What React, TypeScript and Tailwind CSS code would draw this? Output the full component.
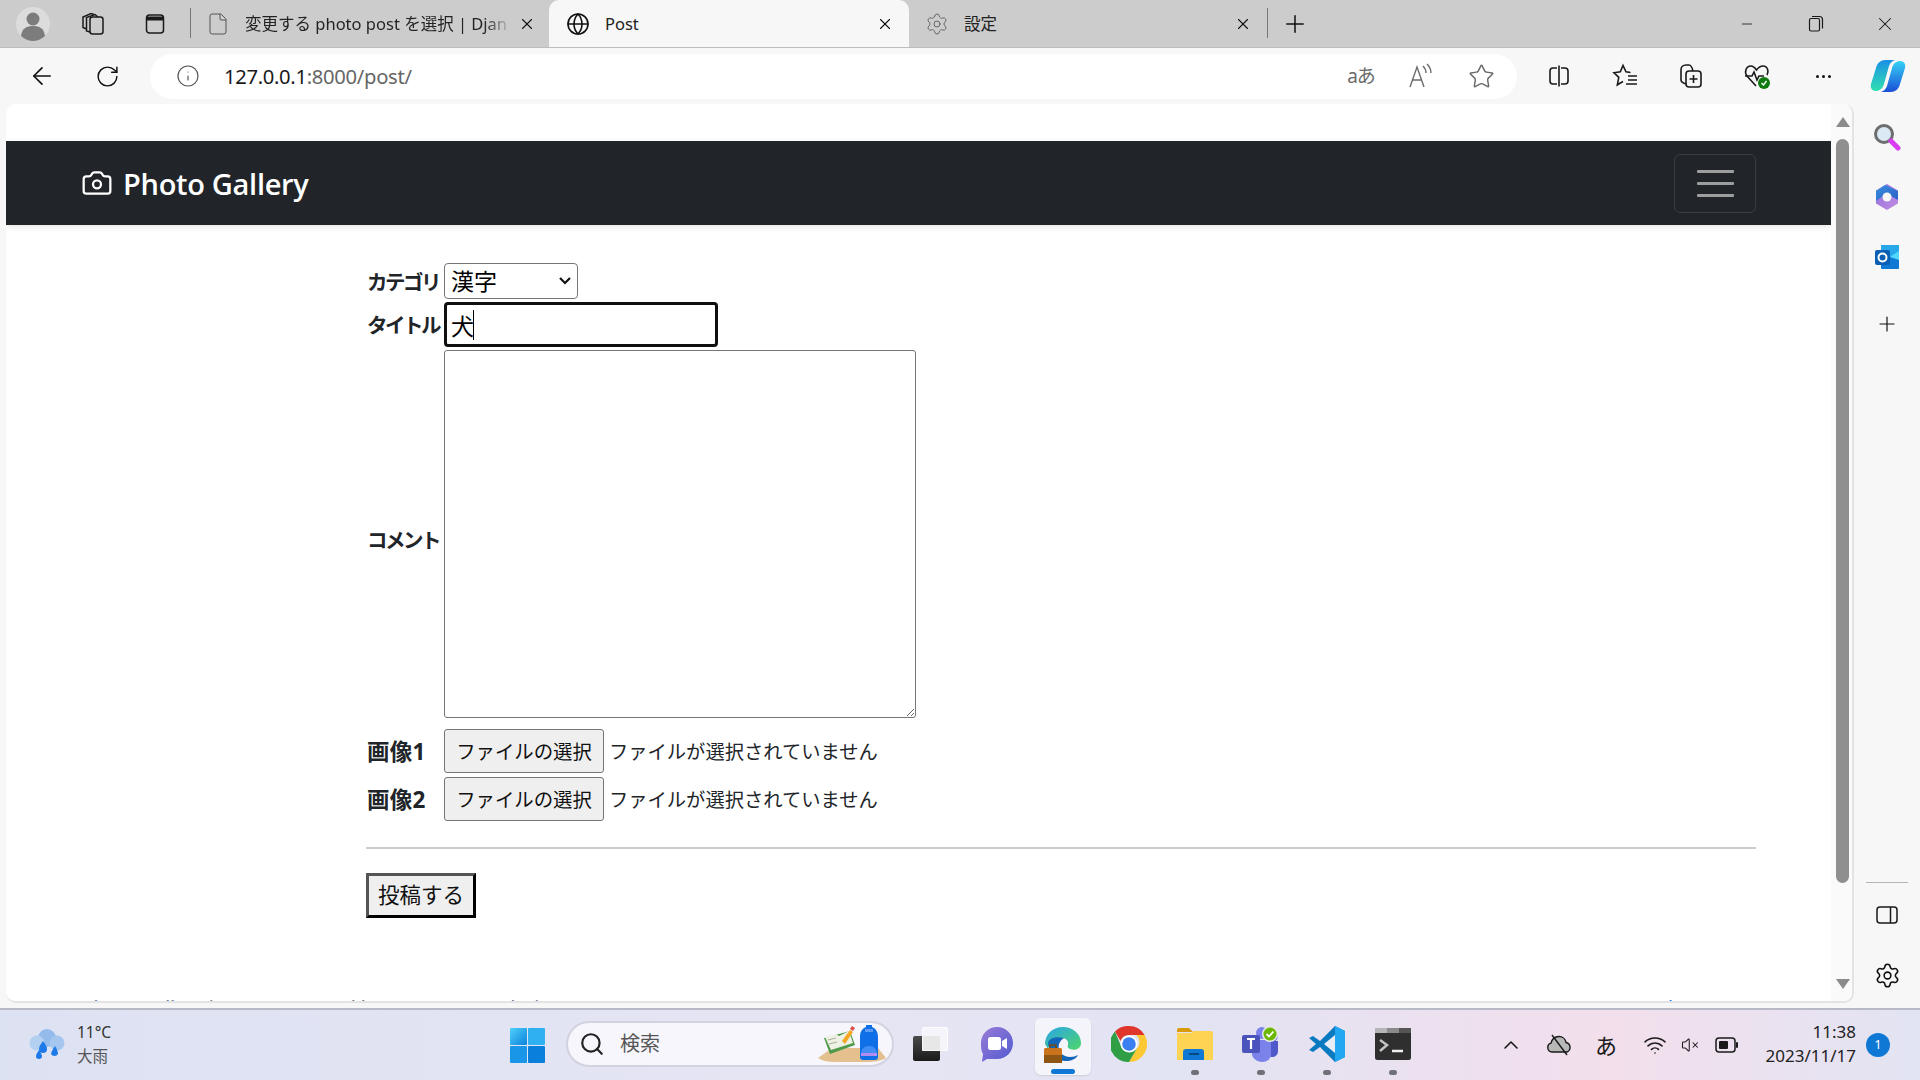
import React from "react";
import {
  ArrowLeft,
  Camera,
  ChevronUp,
  File,
  Globe,
  Info,
  Minus,
  Plus,
  RotateCw,
  Search,
  Settings,
  Star,
  VolumeX,
  Wifi,
  X,
} from "lucide-react";

const UI_FONT = "font-['Noto_Sans','Noto_Sans_CJK_JP',sans-serif]";

function ProfileIcon() {
  return (
    <svg width="36" height="36" viewBox="0 0 36 36">
      <ellipse cx="18" cy="18" rx="17" ry="17" fill="#dcdcdc" />
      <circle cx="18" cy="13" r="6.5" fill="#7c7c7c" />
      <path d="M6 30c1-8 6-10 12-10s11 2 12 10c-3 3-8 5-12 5s-9-2-12-5z" fill="#7c7c7c" />
    </svg>
  );
}

function CollectionsTabIcon() {
  return (
    <svg width="26" height="26" viewBox="0 0 26 26" fill="none" stroke="#1a1a1a" strokeWidth="1.5">
      <rect x="10" y="6" width="13" height="17" rx="2.5" />
      <path d="M10 21L6.5 20V6.5L15 3.5l3 2.5" />
      <path d="M6.5 18L3 16.5V6L11 2.5l3 1" />
    </svg>
  );
}

function VerticalTabsIcon() {
  return (
    <svg width="24" height="24" viewBox="0 0 24 24" fill="none" stroke="#1a1a1a" strokeWidth="1.5">
      <rect x="3.5" y="3" width="17" height="18" rx="3" />
      <path d="M3.5 6.5h17" strokeWidth="4" />
    </svg>
  );
}

function RestoreIcon() {
  return (
    <svg width="16" height="18" viewBox="0 0 16 18" fill="none" stroke="#1a1a1a" strokeWidth="1.2">
      <rect x="1.5" y="3.5" width="10" height="12.5" rx="1.5" />
      <path d="M4 1.5h7.5a3 3 0 0 1 3 3v9" />
    </svg>
  );
}

function TranslateIcon() {
  return <span className="text-[19px] tracking-[-1px] text-[#6b6b6b]">aあ</span>;
}

function ReadAloudIcon() {
  return (
    <svg width="26" height="26" viewBox="0 0 26 26" fill="none" stroke="#6b6b6b" strokeWidth="1.4">
      <path d="M2 24L9 4l7 20M4.5 17h9" />
      <path d="M15 3c2 2 3 4 3 7M19 1c2.500 2.500 4 5.500 4 9" />
    </svg>
  );
}

function SplitIcon() {
  return (
    <svg width="24" height="24" viewBox="0 0 24 24" fill="none" stroke="#1a1a1a" strokeWidth="1.6">
      <path d="M10 4H6a3 3 0 0 0-3 3v10a3 3 0 0 0 3 3h4M14 4h4a3 3 0 0 1 3 3v10a3 3 0 0 1-3 3h-4M12 1.500v21" />
    </svg>
  );
}

function FavoritesIcon() {
  return (
    <svg width="26" height="26" viewBox="0 0 26 26" fill="none" stroke="#1a1a1a" strokeWidth="1.6">
      <path d="M18.500 9.500L14 8.800 11 2.500 8.300 8.800 2 9.800l4.800 4.500-1.500 7.500 5.700-3.300" />
      <path d="M16 13h9M16 17h9M14 21h11" />
    </svg>
  );
}

function CollectionsIcon() {
  return (
    <svg width="26" height="26" viewBox="0 0 26 26" fill="none" stroke="#1a1a1a" strokeWidth="1.6">
      <rect x="8" y="8" width="15" height="16" rx="3" />
      <path d="M15.500 12v8M11.500 16h8" />
      <path d="M8 21c-3-1-5-2-5-4V7c0-3 2-5 5-5h3c2 0 3 2 4 6" />
    </svg>
  );
}

function HealthIcon() {
  return (
    <svg width="28" height="28" viewBox="0 0 28 28" fill="none">
      <path d="M13 24L4 14C1 10 3 4 8 4c3 0 4 2 5.500 4C15 6 17 4 20 4c5 0 6 6 4 9" stroke="#1a1a1a" strokeWidth="1.6" />
      <path d="M2 14h7l2-4 3 8 2-4h5" stroke="#1a1a1a" strokeWidth="1.6" />
      <circle cx="21" cy="21" r="6" fill="#0f7b0f" />
      <path d="M18.500 21l2 2 3-4" stroke="#fff" strokeWidth="1.4" />
    </svg>
  );
}

function CopilotLogo() {
  return (
    <svg width="36" height="34" viewBox="0 0 36 34">
      <defs>
        <linearGradient id="cpA" x1="0" y1="0" x2="0" y2="1">
          <stop offset="0" stopColor="#1b8fe6" />
          <stop offset="1" stopColor="#2fe0b0" />
        </linearGradient>
        <linearGradient id="cpB" x1="0" y1="0" x2="0" y2="1">
          <stop offset="0" stopColor="#35d2f5" />
          <stop offset="1" stopColor="#1a4fd8" />
        </linearGradient>
      </defs>
      <path d="M15 1h10c-3 1-5 3-6 6L14 25c-1 4-4 7-8 7-4 0-6-3-5-7L6 9c1-5 5-8 9-8z" fill="url(#cpA)" />
      <path d="M21 33H11c3-1 5-3 6-6l5-18c1-4 4-7 8-7 4 0 6 3 5 7l-5 16c-1 5-5 8-9 8z" fill="url(#cpB)" />
    </svg>
  );
}

function SideSearchLogo() {
  return (
    <svg width="28" height="28" viewBox="0 0 28 28">
      <circle cx="11" cy="11" r="8.500" fill="#dbe9f4" stroke="#6d6d6d" strokeWidth="3" />
      <path d="M18 18l7 7" stroke="#d93df2" strokeWidth="5" strokeLinecap="round" />
    </svg>
  );
}

function M365Logo() {
  return (
    <svg width="26" height="28" viewBox="0 0 26 28">
      <defs>
        <linearGradient id="msA" x1="0" y1="0" x2="1" y2="1">
          <stop offset="0" stopColor="#3a8fe0" />
          <stop offset="1" stopColor="#2a5fc4" />
        </linearGradient>
        <linearGradient id="msB" x1="0" y1="0" x2="1" y2="1">
          <stop offset="0" stopColor="#8f6fe0" />
          <stop offset="1" stopColor="#c18de0" />
        </linearGradient>
      </defs>
      <path d="M13 1l11 6.500v13L13 27 2 20.500v-13z" fill="url(#msB)" />
      <path d="M11 2l13 6v9l-7-4c-2-2-6-2-8 0L2 18V8z" fill="url(#msA)" />
      <circle cx="13" cy="14" r="4.500" fill="#f7f7f7" />
    </svg>
  );
}

function OutlookLogo() {
  return (
    <svg width="26" height="26" viewBox="0 0 26 26">
      <rect x="7" y="1" width="18" height="12" fill="#28a8ea" />
      <rect x="7" y="13" width="18" height="12" rx="1" fill="#0f78d4" />
      <path d="M16 13l9-6v9z" fill="#50d9ff" />
      <rect x="1" y="6" width="15" height="15" rx="2" fill="#0a5fb4" />
      <circle cx="8.500" cy="13.500" r="4" fill="none" stroke="#fff" strokeWidth="2" />
    </svg>
  );
}

function PanelIcon() {
  return (
    <svg width="22" height="20" viewBox="0 0 22 20" fill="none" stroke="#1a1a1a" strokeWidth="1.500">
      <rect x="1" y="2" width="20" height="16" rx="3" />
      <path d="M14.500 2v16" />
    </svg>
  );
}

function WeatherLogo() {
  return (
    <svg width="38" height="34" viewBox="0 0 38 34">
      <circle cx="19" cy="10" r="9" fill="#93bcec" />
      <circle cx="9" cy="15" r="7.500" fill="#b3d0f0" />
      <circle cx="29" cy="15" r="7.500" fill="#a5c6ee" />
      <path d="M15 13c3 4 4 6 4 8a4 4 0 0 1-8 0c0-2 1-4 4-8z" fill="#1d79e8" />
      <path d="M11 22c2 3 3 5 3 6a3 3 0 0 1-6 0c0-1 1-3 3-6z" fill="#1d79e8" />
      <path d="M27 18c2 3 3 6 3 8a4 4 0 0 1-7 0c0-2 2-5 4-8z" fill="#1d79e8" />
    </svg>
  );
}

function StartLogo() {
  return (
    <svg width="35" height="35" viewBox="0 0 35 35">
      <defs>
        <linearGradient id="stA" x1="0" y1="0" x2="1" y2="1">
          <stop offset="0" stopColor="#4fd0fa" />
          <stop offset="1" stopColor="#0a84dc" />
        </linearGradient>
      </defs>
      <rect x="0" y="0" width="17" height="17" rx="1" fill="url(#stA)" />
      <rect x="18" y="0" width="17" height="17" rx="1" fill="#2fb0f0" />
      <rect x="0" y="18" width="17" height="17" rx="1" fill="#1a96e8" />
      <rect x="18" y="18" width="17" height="17" rx="1" fill="#0a7fdc" />
    </svg>
  );
}

function SearchArt() {
  return (
    <svg width="68" height="38" viewBox="0 0 68 38">
      <path d="M0 33l14-10h46l8 10c-5 3-12 4-20 4H18C11 37 5 36 0 33z" fill="#e3c08e" />
      <path d="M6 13l26-7 5 14-25 9z" fill="#4e9a4a" />
      <path d="M7 12l11-3 3 2 10-5 4 12-22 7z" fill="#eef0e4" />
      <path d="M10 15l8-2M11 19l8-2" stroke="#a9b0a0" strokeWidth="1" />
      <path d="M24 16l8-11 3 2-8 12z" fill="#f5a623" />
      <path d="M32 4l2-3 3 2-2 3z" fill="#e04b4b" />
      <path d="M42 12c0-6 3-9 6-10V0h6v2c3 1 6 4 6 10v20c0 2-1 3-3 3H45c-2 0-3-1-3-3z" fill="#0f6fe6" />
      <path d="M47 4h8v3h-8z" fill="#5a9cf5" />
      <path d="M43 30c0-6 3-9 8-9s8 3 8 9z" fill="#3f8df5" />
      <path d="M43 28h16v3H43z" fill="#b48cf0" />
    </svg>
  );
}

function TaskViewIcon() {
  return (
    <div className="w-[36px] h-[34px] flex items-end">
      <div className="w-[27px] h-[25px] rounded-[2px] bg-gradient-to-b from-[#4a4a4a] to-[#1b1b1b] flex justify-end">
        <div className="w-[18px] h-[15px] bg-[#c4c4c4]" />
      </div>
      <div className="w-[26px] h-[24px] -ml-[18px] mb-[10px] rounded-[2px] bg-white/60 border border-white/70" />
    </div>
  );
}

function MeetLogo() {
  return (
    <svg width="34" height="36" viewBox="0 0 34 36">
      <defs>
        <linearGradient id="mtA" x1="0" y1="0" x2="1" y2="1">
          <stop offset="0" stopColor="#9a7ad8" />
          <stop offset="1" stopColor="#4f5bd0" />
        </linearGradient>
      </defs>
      <path d="M17 1c9 0 16 7 16 16s-7 16-16 16H7l-5 3 1-8C1 25 1 21 1 17 1 8 8 1 17 1z" fill="url(#mtA)" />
      <rect x="8" y="11" width="13" height="13" rx="2.500" fill="#fff" />
      <path d="M22 15l5-3v11l-5-3z" fill="#fff" />
    </svg>
  );
}

function EdgeLogo() {
  return (
    <svg width="38" height="37" viewBox="0 0 38 37">
      <defs>
        <linearGradient id="egA" x1="0" y1="0" x2="1" y2="1">
          <stop offset="0" stopColor="#2aa5e8" />
          <stop offset="1" stopColor="#4fd66a" />
        </linearGradient>
      </defs>
      <path d="M1 18C1 8 9 1 19 1s18 7 18 16c0 6-6 8-11 6-2-1-3-2-2-4 1-4-2-7-6-7-7 0-12 4-14 11z" fill="url(#egA)" />
      <path d="M4 17c1 10 8 18 18 18 5 0 10-2 12-6-5 3-14 3-18-3-3-5-1-11 4-14C12 10 5 12 4 17z" fill="#1466b8" />
      <rect x="0" y="22" width="18" height="15" rx="1.500" fill="#c9741c" />
      <rect x="0" y="29" width="18" height="8" fill="#8f5512" />
      <path d="M6 22v-3h6v3" stroke="#7a4a10" strokeWidth="1.500" fill="none" />
    </svg>
  );
}

function ChromeLogo() {
  return (
    <svg width="36" height="36" viewBox="0 0 36 36">
      <path d="M18 0a18 18 0 0 1 15.600 9H18a9 9 0 0 0-8.500 6L4 5.500A18 18 0 0 1 18 0z" fill="#e0352b" />
      <path d="M33.600 9A18 18 0 0 1 18 36l7.800-13.500A9 9 0 0 0 25 9z" fill="#fcc934" />
      <path d="M4 5.500A18 18 0 0 0 18 36l7.800-13.500a9 9 0 0 1-15.600-2z" fill="#2f9e44" />
      <circle cx="18" cy="18" r="8.500" fill="#fff" />
      <circle cx="18" cy="18" r="6.800" fill="#3c7ff0" />
    </svg>
  );
}

function FolderLogo() {
  return (
    <svg width="36" height="32" viewBox="0 0 36 32">
      <path d="M0 2a2 2 0 0 1 2-2h10l4 4h-16z" fill="#d99a0c" />
      <path d="M0 5h14l3-2h17a2 2 0 0 1 2 2v27H0z" fill="#fcd353" />
      <path d="M6 32v-8a3 3 0 0 1 3-3h15a3 3 0 0 1 3 3v8z" fill="#0f78d4" />
      <path d="M12 26h10" stroke="#07487f" strokeWidth="2" />
    </svg>
  );
}

function TeamsLogo() {
  return (
    <svg width="38" height="36" viewBox="0 0 38 36">
      <circle cx="20" cy="7" r="6" fill="#7b83eb" />
      <circle cx="31" cy="11" r="4.500" fill="#5059c9" />
      <path d="M26 15h10v10c0 4-3 6-6 6-2 0-4-1-4-3z" fill="#5059c9" />
      <path d="M10 14h19v14c0 5-4 8-9 8s-10-4-10-8z" fill="#7b83eb" />
      <rect x="0" y="9" width="18" height="18" rx="2" fill="#4b53bc" />
      <path d="M5 13h8M9 13v10" stroke="#fff" strokeWidth="2.200" fill="none" />
      <circle cx="28" cy="8" r="8" fill="#e6e6e6" />
      <circle cx="28" cy="8" r="6.500" fill="#6bb700" />
      <path d="M24.500 8l2.500 2.500 4.500-5" stroke="#fff" strokeWidth="1.800" fill="none" />
    </svg>
  );
}

function VSCodeLogo() {
  return (
    <svg width="36" height="36" viewBox="0 0 36 36">
      <path d="M26 0l10 5v26l-10 5L11 21l-7 5-4-2 7-6-7-6 4-2 7 5z" fill="#0a7ac0" />
      <path d="M26 0l10 5v26l-10 5z" fill="#22a7f2" />
      <path d="M26 9L15 18l11 9z" fill="#e9edf6" />
    </svg>
  );
}

function TerminalLogo() {
  return (
    <svg width="36" height="32" viewBox="0 0 36 32">
      <rect x="0" y="0" width="36" height="32" rx="2.500" fill="#2f2f2f" />
      <rect x="0" y="0" width="12" height="5" fill="#b5b5b5" />
      <rect x="12" y="0" width="12" height="5" fill="#8a8a8a" />
      <rect x="24" y="0" width="12" height="5" fill="#555" />
      <path d="M5 12l7 5-7 6" stroke="#c4c4c4" strokeWidth="2.500" fill="none" />
      <path d="M17 23h11" stroke="#f0f0f0" strokeWidth="2.500" />
    </svg>
  );
}

function OneDriveOffIcon() {
  return (
    <svg width="26" height="24" viewBox="0 0 26 24" stroke="#1a1a1a" strokeWidth="1.400" fill="#b8b8b8">
      <path d="M6 19a4.500 4.500 0 0 1-1-8.800C6 6 9 3.500 13 3.500c3.500 0 6.500 2.500 7 6a5 5 0 0 1 1 9.500z" />
      <path d="M6 2l15 20" fill="none" />
    </svg>
  );
}

function BatteryIcon() {
  return (
    <svg width="24" height="18" viewBox="0 0 24 18" fill="none">
      <rect x="1" y="2" width="19" height="14" rx="3" stroke="#1a1a1a" strokeWidth="1.500" />
      <rect x="4" y="5" width="9" height="8" rx="1" fill="#1a1a1a" />
      <path d="M22 7v4" stroke="#1a1a1a" strokeWidth="2" strokeLinecap="round" />
    </svg>
  );
}

function Tab({
  icon,
  title,
  active,
  fade,
  className,
}: {
  icon: React.ReactNode;
  title: string;
  active?: boolean;
  fade?: boolean;
  className: string;
}) {
  return (
    <div
      className={`h-full flex items-center ${className} ${
        active ? "bg-[#f7f7f7] rounded-t-[10px]" : ""
      }`}
    >
      <span className="w-[26px] flex justify-center shrink-0">{icon}</span>
      <span
        className={`ml-[14px] pt-[1px] flex-1 whitespace-nowrap text-[16.500px] text-[#222] ${
          fade ? "bg-gradient-to-r from-[#222] from-[90%] to-[#c4c4c4] bg-clip-text text-transparent" : ""
        }`}
      >
        {title}
      </span>
      <X size={18} strokeWidth={1.500} className="ml-[8px] shrink-0 text-[#111]" />
    </div>
  );
}

function TabBar() {
  return (
    <div className="h-[48px] shrink-0 flex items-end bg-[#cccccc] border-b border-[#bdbdbd]">
      <div className="w-[66px] h-full flex items-center justify-center"><ProfileIcon /></div>
      <div className="w-[54px] h-full flex items-center justify-center"><CollectionsTabIcon /></div>
      <div className="w-[70px] h-full flex items-center justify-center"><VerticalTabsIcon /></div>
      <div className="w-px h-[30px] mb-[9px] bg-[#777]" />
      <Tab
        fade
        className="w-[358px] pl-[14px] pr-[13px]"
        icon={<File size={24} strokeWidth={1} className="text-[#555]" />}
        title="変更する photo post を選択 | Djan"
      />
      <Tab
        active
        className="w-[360px] pl-[16px] pr-[15px]"
        icon={<Globe size={24} strokeWidth={1.600} className="text-[#111]" />}
        title="Post"
      />
      <Tab
        className="w-[358px] pl-[15px] pr-[15px]"
        icon={<Settings size={24} strokeWidth={1} className="text-[#666]" />}
        title="設定"
      />
      <div className="w-px h-[30px] mb-[9px] bg-[#777]" />
      <div className="w-[54px] h-full flex items-center justify-center">
        <Plus size={28} strokeWidth={1.300} className="text-[#111]" />
      </div>
      <div className="ml-auto h-full flex items-center">
        <div className="w-[70px] flex justify-center"><Minus size={16} strokeWidth={1.200} className="text-[#111]" /></div>
        <div className="w-[68px] flex justify-center"><RestoreIcon /></div>
        <div className="w-[70px] flex justify-center"><X size={22} strokeWidth={1.100} className="text-[#111]" /></div>
      </div>
    </div>
  );
}

function Toolbar() {
  return (
    <div className="h-[56px] shrink-0 flex items-center bg-[#f7f7f7]">
      <div className="w-[84px] flex justify-center"><ArrowLeft size={28} strokeWidth={1.400} className="text-[#111]" /></div>
      <div className="w-[48px] flex justify-center"><RotateCw size={25} strokeWidth={1.400} className="text-[#111]" /></div>
      <div className="ml-[18px] w-[1368px] h-[45px] bg-white rounded-full flex items-center">
        <div className="w-[76px] flex justify-center"><Info size={24} strokeWidth={1.200} className="text-[#555]" /></div>
        <span className="-ml-[2px] text-[20.200px] tracking-[-0.300px] text-[#1a1a1a]">
          127.0.0.1<span className="text-[#666]">:8000/post/</span>
        </span>
        <div className="ml-auto flex items-center pr-[6px]">
          <div className="w-[60px] flex justify-center"><TranslateIcon /></div>
          <div className="w-[60px] flex justify-center"><ReadAloudIcon /></div>
          <div className="w-[60px] flex justify-center"><Star size={27} strokeWidth={1.300} className="text-[#6b6b6b]" /></div>
        </div>
      </div>
      <div className="ml-[9px] flex items-center">
        <div className="w-[66px] flex justify-center"><SplitIcon /></div>
        <div className="w-[66px] flex justify-center"><FavoritesIcon /></div>
        <div className="w-[66px] flex justify-center"><CollectionsIcon /></div>
        <div className="w-[66px] flex justify-center"><HealthIcon /></div>
        <div className="w-[66px] flex justify-center">
          <span className="flex gap-[3px]">
            <i className="w-[3px] h-[3px] rounded-full bg-[#111]" />
            <i className="w-[3px] h-[3px] rounded-full bg-[#111]" />
            <i className="w-[3px] h-[3px] rounded-full bg-[#111]" />
          </span>
        </div>
        <div className="w-[64px] flex justify-center"><CopilotLogo /></div>
      </div>
    </div>
  );
}

function Navbar() {
  return (
    <div className="h-[84px] shrink-0 flex items-center justify-between bg-[#212529] pl-[76px] pr-[75px] shadow-[0_2px_6px_rgba(0,0,0,0.1)]">
      <div className="flex items-center gap-[10px] text-white">
        <Camera size={32} strokeWidth={1.700} className="-ml-[1px]" />
        <span className="pt-[2px] text-[29px] font-semibold tracking-[-0.300px] font-['Open_Sans',sans-serif]">Photo Gallery</span>
      </div>
      <div className="w-[82px] h-[59px] rounded-[6px] border border-[#3a3e43] flex flex-col items-center justify-center gap-[9px]">
        <span className="w-[37px] h-[3px] bg-[#9b9d9e] rounded-[1px]" />
        <span className="w-[37px] h-[3px] bg-[#9b9d9e] rounded-[1px]" />
        <span className="w-[37px] h-[3px] bg-[#9b9d9e] rounded-[1px]" />
      </div>
    </div>
  );
}

function FormRow({
  label,
  className,
  labelClass,
  children,
}: {
  label: string;
  className: string;
  labelClass: string;
  children: React.ReactNode;
}) {
  return (
    <div className={`flex items-center ${className}`}>
      <label className={`w-[78px] shrink-0 pl-[1px] font-bold text-[#212529] whitespace-nowrap ${labelClass}`}>
        {label}
      </label>
      {children}
    </div>
  );
}

function FilePicker() {
  return (
    <>
      <button className="w-[160px] h-[44px] pt-[1px] rounded-[3px] border border-[#767676] bg-[#efefef] text-[19.400px] text-[#111] whitespace-nowrap">
        ファイルの選択
      </button>
      <span className="ml-[5px] pt-[3px] text-[19.300px] text-[#212529] whitespace-nowrap">
        ファイルが選択されていません
      </span>
    </>
  );
}

function PostForm() {
  return (
    <div className="ml-[360px] mt-[38px] w-[1390px] shrink-0">
      <FormRow label="カテゴリ" className="h-[36px]" labelClass="pt-[3px] text-[20.500px] tracking-[-2.500px]">
        <div className="relative">
          <select
            defaultValue="kanji"
            className="block appearance-none w-[134px] h-[36px] rounded-[4px] border border-[#767676] bg-white pl-[6px] text-[23px] text-black"
          >
            <option value="kanji">漢字</option>
          </select>
          <svg
            width="14"
            height="10"
            viewBox="0 0 14 10"
            fill="none"
            stroke="#111"
            strokeWidth="2.200"
            className="absolute right-[6px] top-[13px] pointer-events-none"
          >
            <path d="M2 2l5 5 5-5" />
          </svg>
        </div>
      </FormRow>
      <FormRow label="タイトル" className="h-[45px] mt-[3px]" labelClass="pt-[2px] text-[20.500px] tracking-[-2.500px]">
        <div className="relative">
          <input
            readOnly
            defaultValue="犬"
            className="w-[274px] h-[45px] rounded-[4px] border-[3px] border-[#101010] bg-white pl-[4px] text-[23px] text-black outline-none"
          />
          <span className="absolute left-[29px] top-[8px] w-[1px] h-[30px] bg-black" />
        </div>
      </FormRow>
      <FormRow label="コメント" className="h-[368px] mt-[3px]" labelClass="pt-[12px] text-[20.500px] tracking-[-2.500px]">
        <textarea
          readOnly
          className="w-[472px] h-[368px] rounded-[3px] border border-[#767676] bg-white"
        />
      </FormRow>
      <FormRow label="画像1" className="h-[44px] mt-[11px]" labelClass="pt-[2px] text-[22.500px] tracking-[0.200px]">
        <FilePicker />
      </FormRow>
      <FormRow label="画像2" className="h-[44px] mt-[4px]" labelClass="pt-[2px] text-[22.500px] tracking-[0.200px]">
        <FilePicker />
      </FormRow>
      <div className="h-[2px] mt-[26px] bg-[#cccccc]" />
      <button className="mt-[24px] w-[110px] h-[45px] border-[3px] border-t-[#555] border-l-[#555] border-r-black border-b-black bg-[#efefef] text-[21.500px] text-[#111] whitespace-nowrap">
        投稿する
      </button>
    </div>
  );
}

function Footer() {
  return (
    <div className="mt-[76px] flex justify-between pl-[76px] pr-[94px] text-[19.200px] leading-[28px] text-[#6c757d] whitespace-nowrap">
      <span>Photo Gallery is 2023 powered by Bootstrap and Django</span>
      <a className="text-[#0d6efd]">Back to top</a>
    </div>
  );
}

function Scrollbar() {
  return (
    <div className="w-[23px] shrink-0 h-full flex flex-col items-center bg-[#fafafa] pt-[13px] pb-[12px]">
      <span className="w-0 h-0 border-x-[7.500px] border-x-transparent border-b-[10px] border-b-[#8b8b8b]" />
      <span className="mt-[12px] w-[13px] h-[744px] rounded-full bg-[#8f8f8f]" />
      <span className="mt-auto w-0 h-0 border-x-[7.500px] border-x-transparent border-t-[10px] border-t-[#8b8b8b]" />
    </div>
  );
}

function Sidebar() {
  return (
    <div className="w-[66px] shrink-0 h-full flex flex-col items-center pt-[3px] pb-[4px]">
      <div className="h-[60px] flex items-center"><SideSearchLogo /></div>
      <div className="h-[60px] flex items-center"><M365Logo /></div>
      <div className="h-[60px] flex items-center"><OutlookLogo /></div>
      <div className="h-[68px] pt-[5px] flex items-center"><Plus size={24} strokeWidth={1.200} className="text-[#111]" /></div>
      <div className="mt-auto w-[42px] h-px bg-[#b5b5b5]" />
      <div className="h-[63px] flex items-center"><PanelIcon /></div>
      <div className="h-[58px] flex items-center"><Settings size={27} strokeWidth={1.400} className="text-[#111]" /></div>
    </div>
  );
}

function AppCell({
  children,
  dot,
  active,
}: {
  children: React.ReactNode;
  dot?: boolean;
  active?: boolean;
}) {
  return (
    <div className="relative w-[66px] h-full flex items-center justify-center">
      {active && (
        <span className="absolute left-[5px] top-[8px] w-[56px] h-[57px] rounded-[6px] bg-white/60 shadow-[0_1px_2px_rgba(0,0,0,0.1)]" />
      )}
      <span className="relative -mt-[2px] flex">{children}</span>
      {dot && <span className="absolute left-[29px] top-[60px] w-[8px] h-[5px] rounded-full bg-[#707078]" />}
      {active && <span className="absolute left-[21px] top-[59px] w-[24px] h-[5px] rounded-full bg-[#0f78d4]" />}
    </div>
  );
}

function Taskbar() {
  return (
    <div className="h-[72px] shrink-0 flex items-center border-t-[2px] border-[#b7b9c6] bg-[linear-gradient(90deg,#dde2f2_0%,#e6e5f4_45%,#e2e3f3_62%,#f3dfec_84%,#e2e4f3_100%)] overflow-hidden">
      <div className="w-[510px] shrink-0 flex items-center pl-[28px]">
        <WeatherLogo />
        <div className="ml-[11px] -mt-[2px] text-[15.500px] leading-[24px] text-[#333]">
          <div>11°C</div>
          <div className="text-[#555]">大雨</div>
        </div>
      </div>
      <StartLogo />
      <div className="ml-[21px] -mt-[2px] w-[328px] h-[46px] rounded-full bg-[#f6f6fc] border-[2px] border-[#d2d2e0] flex items-center pl-[11px] pr-[6px] shrink-0">
        <Search size={26} strokeWidth={2} className="text-[#222]" />
        <span className="ml-[15px] text-[20px] text-[#555]">検索</span>
        <span className="ml-auto flex"><SearchArt /></span>
      </div>
      <div className="ml-[4px] h-full flex shrink-0">
        <AppCell><TaskViewIcon /></AppCell>
        <AppCell><MeetLogo /></AppCell>
        <AppCell active><EdgeLogo /></AppCell>
        <AppCell><ChromeLogo /></AppCell>
        <AppCell dot><FolderLogo /></AppCell>
        <AppCell dot><TeamsLogo /></AppCell>
        <AppCell dot><VSCodeLogo /></AppCell>
        <AppCell dot><TerminalLogo /></AppCell>
      </div>
      <div className="ml-[61px] flex items-center shrink-0 text-[#1a1a1a]">
        <div className="w-[48px] flex justify-center"><ChevronUp size={24} strokeWidth={1.600} /></div>
        <div className="w-[48px] flex justify-center"><OneDriveOffIcon /></div>
        <div className="w-[46px] text-center text-[22px] leading-none">あ</div>
        <div className="w-[52px] flex justify-center"><Wifi size={24} strokeWidth={1.600} /></div>
        <div className="w-[18px] flex justify-center"><VolumeX size={22} strokeWidth={1.400} /></div>
        <div className="w-[56px] flex justify-center"><BatteryIcon /></div>
        <div className="w-[101px] -mt-[2px] text-right text-[17px] leading-[24px] text-[#222]">
          <div>11:38</div>
          <div>2023/11/17</div>
        </div>
        <div className="ml-[10px] w-[24px] h-[24px] rounded-full bg-[#0f78d4] text-white text-[13px] flex items-center justify-center">
          1
        </div>
      </div>
    </div>
  );
}

export default function App() {
  return (
    <div className={`w-[1920px] h-[1080px] overflow-hidden flex flex-col bg-[#f7f7f7] ${UI_FONT}`}>
      <TabBar />
      <Toolbar />
      <div className="h-[904px] flex pl-[6px] shrink-0">
        <div className="w-[1848px] h-[899px] flex bg-white rounded-[10px] overflow-hidden border-b-[2px] border-r-[2px] border-[#e3e3e3] shrink-0">
          <div className="w-[1825px] h-full pt-[37px] flex flex-col overflow-hidden shrink-0">
            <Navbar />
            <PostForm />
            <Footer />
          </div>
          <Scrollbar />
        </div>
        <Sidebar />
      </div>
      <Taskbar />
    </div>
  );
}
